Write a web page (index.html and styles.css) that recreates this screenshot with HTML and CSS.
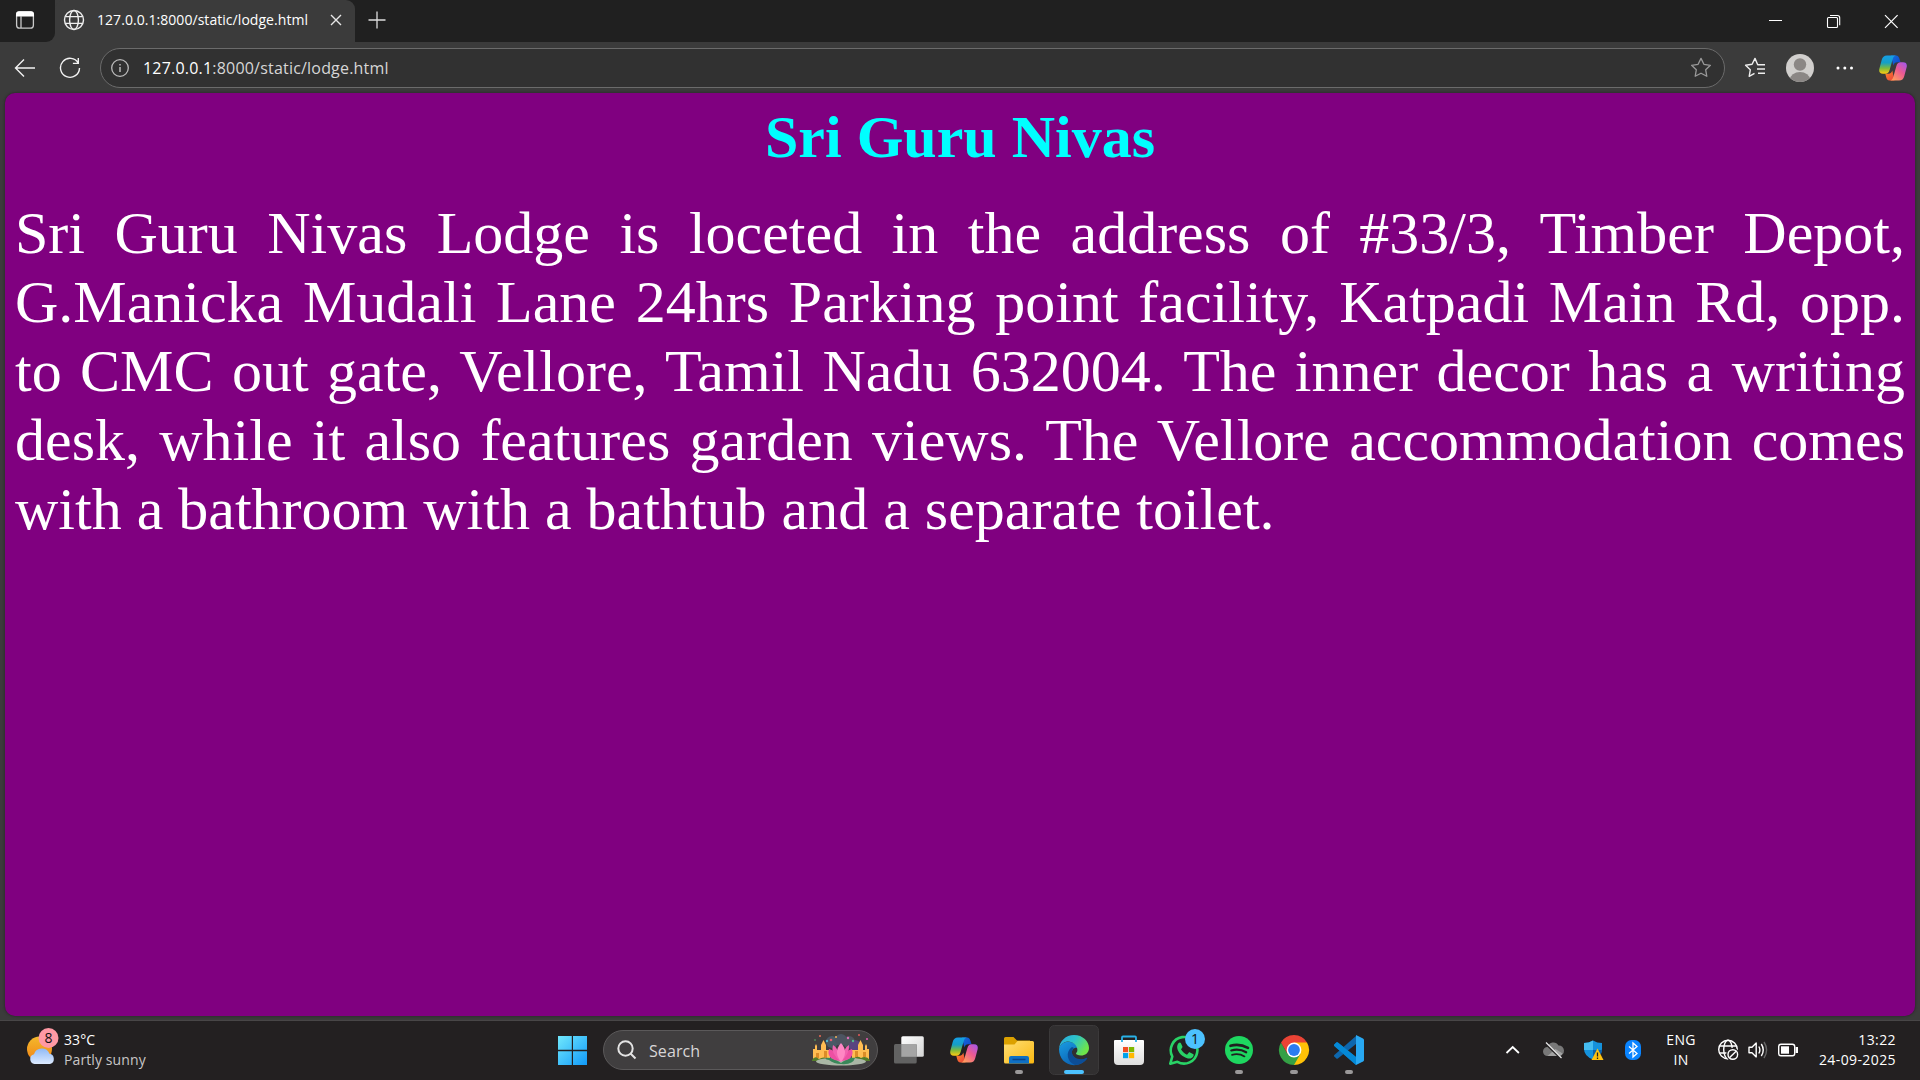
FILE: index.html
```html
<!DOCTYPE html>
<html lang="en">
<head>
<meta charset="utf-8">
<title>127.0.0.1:8000/static/lodge.html</title>
<link rel="stylesheet" href="styles.css">
</head>
<body>
<div class="browser">
  <header class="tabbar">
    <div class="tab-actions">
      <svg width="55" height="42" viewBox="0 0 55 42" fill="none"><rect x="16.6" y="11.8" width="16.8" height="16.4" rx="3" stroke="#c9c9c9" stroke-width="1.3"/><path d="M16 16.5v-2.3a3 3 0 0 1 3-3h12a3 3 0 0 1 3 3v2.3z" fill="#fff"/><path d="M21 16v12" stroke="#c9c9c9" stroke-width="1.3"/></svg>
    </div>
    <div class="tab">
      <svg class="tab-globe" width="22" height="22" viewBox="0 0 22 22" fill="none" stroke="#eee" stroke-width="1.4"><circle cx="11" cy="11" r="9.5"/><ellipse cx="11" cy="11" rx="4.4" ry="9.5"/><path d="M2.3 7.6h17.4M2.3 14.4h17.4"/></svg>
      <span class="tab-title">127.0.0.1:8000/static/lodge.html</span>
      <svg class="tab-close" width="12" height="12" viewBox="0 0 12 12" stroke="#e8e8e8" stroke-width="1.4"><path d="M1 1l10 10M11 1L1 11"/></svg>
    </div>
    <svg class="new-tab" width="18" height="18" viewBox="0 0 18 18" stroke="#ddd" stroke-width="1.3"><path d="M9 .5v17M.5 9h17"/></svg>
    <div class="window-controls">
      <svg width="58" height="42" viewBox="0 0 58 42"><path d="M23 20.5h13" stroke="#fff"/></svg>
      <svg width="58" height="42" viewBox="0 0 58 42" fill="none" stroke="#fff" stroke-width="1.1"><rect x="23.500" y="17.5" width="10" height="10" rx="1"/><path d="M26 15.5h7.5a2.2 2.2 0 0 1 2.2 2.2v7.5"/></svg>
      <svg width="58" height="42" viewBox="0 0 58 42" stroke="#fff" stroke-width="1.2"><path d="M23 15.2l12.6 12.6M35.6 15.2L23 27.8"/></svg>
    </div>
  </header>
  <nav class="toolbar">
    <svg class="back" width="22" height="20" viewBox="0 0 22 20" fill="none" stroke="#f2f2f2" stroke-width="1.4"><path d="M21 10H1.5M10 1.5L1.5 10l8.5 8.5" /></svg>
    <svg class="reload" width="22" height="22" viewBox="0 0 22 22" fill="none" stroke="#f2f2f2" stroke-width="1.4"><path d="M19.3 6.2A9.5 9.5 0 1 0 20.5 11M19.3 1v5.4h-5.4"/></svg>
    <div class="address">
      <svg class="info" width="20" height="20" viewBox="0 0 20 20" fill="none" stroke="#bbb" stroke-width="1.3"><circle cx="10" cy="10" r="8.3"/><path d="M10 9v5M10 6v1.4" stroke-width="1.5"/></svg>
      <span class="url"><b>127.0.0.1</b>:8000/static/lodge.html</span>
      <svg class="star" width="22" height="21" viewBox="0 0 22 21" fill="none" stroke="#999" stroke-width="1.3" stroke-linejoin="round"><path d="M11 1.4l2.9 5.9 6.5 1-4.7 4.5 1.1 6.5L11 16.2l-5.8 3.1 1.1-6.5L1.6 8.3l6.5-1z"/></svg>
    </div>
    <svg class="favorites" width="22" height="21" viewBox="0 0 22 21" fill="none" stroke="#eee" stroke-width="1.4" stroke-linejoin="round"><path d="M20 7.7h-6.3L11 1.4 8.1 7.3l-6.5 1 4.7 4.5-1.1 6.5 5.3-2.9M13.8 7.7H21M13 12h8M14 16.2h7"/></svg>
    <svg class="profile" width="28" height="28" viewBox="0 0 28 28"><clipPath id="pc"><circle cx="14" cy="14" r="14"/></clipPath><g clip-path="url(#pc)"><path fill="#d1cfcd" d="M0 0h28v28H0z"/><circle cx="14" cy="10.5" r="6.2" fill="#8b8785"/><ellipse cx="14" cy="25.5" rx="10" ry="7.5" fill="#8b8785"/></g></svg>
    <svg class="more" width="18" height="4" viewBox="0 0 18 4" fill="#fff"><circle cx="2" cy="2" r="1.5"/><circle cx="8.8" cy="2" r="1.5"/><circle cx="15.5" cy="2" r="1.5"/></svg>
    <svg class="copilot" width="28" height="26" viewBox="0 0 28 26">
      <defs>
        <linearGradient id="ca" x1="0" y1="0" x2="0" y2="1"><stop offset="0" stop-color="#169fe6"/><stop offset=".4" stop-color="#159fc5"/><stop offset=".7" stop-color="#7dbb3c"/><stop offset="1" stop-color="#ffcb10"/></linearGradient>
        <linearGradient id="cb" x1="1" y1="0" x2=".2" y2="1"><stop offset="0" stop-color="#9d56f2"/><stop offset=".5" stop-color="#ec5a91"/><stop offset="1" stop-color="#ffa05c"/></linearGradient>
        <linearGradient id="cc" x1="0" y1="0" x2="1" y2="1"><stop offset="0" stop-color="#1370dc"/><stop offset="1" stop-color="#1142c8"/></linearGradient>
        <linearGradient id="cd" x1="0" y1="0" x2="1" y2="1"><stop offset="0" stop-color="#ff8b28"/><stop offset="1" stop-color="#e83d3d"/></linearGradient>
        <g id="copilot">
          <path fill="url(#cc)" d="M12 .5h5c2 0 2.8 1.2 3.5 3.5l1 3.3h-3.2c-2.5 0-3.4 1.3-4 3.2z"/>
          <path fill="url(#cd)" d="M15.5 25.5h-5c-2 0-2.8-1.2-3.3-3.2l-.9-3.6h3c2.5 0 3.4-1.3 4-3.2z"/>
          <path fill="url(#ca)" d="M8 .5h9c-2 .4-2.8 1.8-3.4 4L10.600 15c-.8 2.600-2 3.700-4 3.700H4C1 18.700-.3 17 .3 14L2.700 5C3.500 2 5 .5 8 .5z"/>
          <path fill="url(#cb)" d="M20 25.500h-9c2-.4 2.800-1.800 3.400-4L17.400 11c.8-2.600 2-3.700 4-3.700H24c3 0 4.300 1.700 3.700 4.700l-2.400 9c-.8 3-2.300 4.500-5.300 4.500z"/>
        </g>
      </defs>
      <use href="#copilot"/>
    </svg>
  </nav>
  <main class="page">
    <h1>Sri Guru Nivas</h1>
    <p>Sri Guru Nivas Lodge is loceted in the address of #33/3, Timber Depot, G.Manicka Mudali Lane 24hrs Parking point facility, Katpadi Main Rd, opp. to CMC out gate, Vellore, Tamil Nadu 632004. The inner decor has a writing desk, while it also features garden views. The Vellore accommodation comes with a bathroom with a bathtub and a separate toilet.</p>
  </main>
</div>
<footer class="taskbar">
  <div class="weather">
    <svg width="32" height="40" viewBox="0 0 32 40">
      <defs><linearGradient id="sun" x1="0" y1="0" x2="0" y2="1"><stop offset="0" stop-color="#f3b92c"/><stop offset="1" stop-color="#f28416"/></linearGradient><linearGradient id="cl" x1="0" y1="0" x2="0" y2="1"><stop offset="0" stop-color="#8fb9f5"/><stop offset="1" stop-color="#dceaff"/></linearGradient></defs>
      <circle cx="12.500" cy="22" r="12.500" fill="url(#sun)"/>
      <path d="M7.500 37a5 5 0 0 1-.5-9.800 8.200 8.200 0 0 1 15.500-.5A5.300 5.300 0 0 1 23 37z" fill="url(#cl)"/>
      <circle cx="21.500" cy="11" r="10" fill="#ff99a4"/>
      <text class="weather-count" x="21.500" y="16" text-anchor="middle">8</text>
    </svg>
    <div class="weather-text"><span>33°C</span><span class="dim">Partly sunny</span></div>
  </div>
  <div class="apps">
    <svg class="app" viewBox="0 0 55 59"><defs><linearGradient id="win" gradientUnits="userSpaceOnUse" x1="13" y1="15" x2="42" y2="44"><stop offset="0" stop-color="#71e8fc"/><stop offset="1" stop-color="#119af9"/></linearGradient></defs><path fill="url(#win)" d="M13 15h13.800v13.800H13zM28 15h14v13.800H28zM13 30.200h13.800V44H13zM28 30.200h14V44H28z"/></svg>
    <div class="search">
      <svg width="20" height="20" viewBox="0 0 20 20" fill="none" stroke="#e4e4e4" stroke-width="2"><circle cx="8.500" cy="8.500" r="7.200"/><path d="M13.500 13.500l5 5"/></svg>
      <span>Search</span>
      <svg class="lotus" width="58" height="34" viewBox="0 0 58 34">
        <g opacity=".65"><circle cx="20" cy="9" r="6" fill="#4f687c"/><circle cx="29" cy="7" r="6" fill="#536174"/><circle cx="37" cy="9" r="6" fill="#566270"/><circle cx="43" cy="13" r="6" fill="#6848a3"/></g>
        <g fill="#ffbd52"><path d="M1 27V16h2v-3l1-2 1 2v4h4v-5l2.500-5 2.500 5v5h4v10zM57 27V16h-2v-3l-1-2-1 2v4h-2V12l-2.500-5L46 12v5h-6v10z"/></g>
        <path d="M4 25v-5h3v5M12 25v-7h3v7M43 24v-6h3v6M51 24v-5h3v5" fill="#dc8c28"/>
        <path d="M0 27q3-5 7-1 5-3 8 0h26q4-4 8-1 5-3 9 2v1H0z" fill="#547c2a"/>
        <ellipse cx="29" cy="28.500" rx="25" ry="4" fill="#aab7a6"/><path d="M17 27q-3 0-4-2 8-1 16 5 8-6 14-5-2 7-14 6-7 0-12-4z" fill="#39885a"/>
        <path fill="#ee4fa3" d="M29 28Q14 27 17 16q7 1 12 12Q43 27 40 16q-7 1-11 12z"/><path fill="#f263b0" d="M29 29Q18 20 21 12q6 3 8 17 9-9 8-17-6 3-8 17z"/><path fill="#ff87c4" d="M29 29q-8-10 0-19 8 9 0 19z"/>
        <g><circle cx="8" cy="3" r="1" fill="#e96b56"/><circle cx="15" cy="8" r="1.200" fill="#55b6c9"/><circle cx="19" cy="7" r="1.300" fill="#e65e6e"/><circle cx="24" cy="4" r="1" fill="#f0b45c"/><circle cx="36" cy="5" r="1.200" fill="#de6fb8"/><circle cx="41" cy="8" r="1.200" fill="#55b98a"/><circle cx="47" cy="2" r="1" fill="#e35a5a"/><circle cx="55" cy="6" r="1" fill="#e35ab2"/><circle cx="3" cy="7" r=".8" fill="#5ab96a"/></g>
      </svg>
    </div>
    <svg class="app" viewBox="0 0 55 59"><defs><linearGradient id="tv" x1="0" y1="0" x2="1" y2="1"><stop offset="0" stop-color="#fff"/><stop offset="1" stop-color="#d5d5d5"/></linearGradient></defs><rect x="19.300" y="15.300" width="22.500" height="20.500" rx="1.500" fill="url(#tv)"/><rect x="12" y="23" width="22.700" height="19.600" rx="1.500" fill="#626262"/><path d="M19.300 23h15.400v12.800H19.300z" fill="#a5a5a5"/></svg>
    <svg class="app" viewBox="0 0 55 59"><use href="#copilot" x="13" y="16"/></svg>
    <svg class="app" viewBox="0 0 55 59"><defs><linearGradient id="fo" x1="0" y1="0" x2="1" y2="1"><stop offset="0" stop-color="#ffdf75"/><stop offset="1" stop-color="#fbb811"/></linearGradient></defs><path fill="#dca100" d="M12 17.500q0-1.500 1.500-1.500h8l3.500 3.500H38V28H12z"/><path fill="url(#fo)" d="M12 23.500h10.500l3-3.500H40.500q1.500 0 1.500 1.500V41q0 1.500-1.500 1.500h-27Q12 42.500 12 41z"/><path d="M17 42.500V37q0-2 2-2h16q2 0 2 2v5.500z" fill="#0f70c4"/><path d="M20.500 38.500h13" stroke="#0b438b" stroke-width="1.500"/><rect x="23" y="49" width="8" height="4" rx="2" fill="#9a9899"/></svg>
    <svg class="app" viewBox="0 0 55 59">
      <defs><linearGradient id="e1" x1="0" y1="0" x2="1" y2=".5"><stop offset="0" stop-color="#2aa8df"/><stop offset=".5" stop-color="#2dc3cb"/><stop offset="1" stop-color="#6ee54a"/></linearGradient><linearGradient id="e2" x1="0" y1="0" x2=".7" y2="1"><stop offset="0" stop-color="#199ce2"/><stop offset="1" stop-color="#0a5cae"/></linearGradient></defs>
      <rect x="2.500" y="4.500" width="49" height="49" rx="5" fill="#312f30" stroke="#3b393a"/>
      <path fill="url(#e2)" d="M12 28c1-5 6-8 11-7 4 .5 7 3 8 6-4-1-7 2-6 6 1 5 8 8 15 4-3 5-8 7.200-13 7.200C18 44 12 37 12 28z"/>
      <path fill="#0c4d96" d="M25 26c-7 5-5 15 3 18 5 0 10-3 12.200-6.500.4-.8-.3-1-.9-.6C33 40 26 37 25 32c-.4-2 .6-4 2-5z"/>
      <path fill="url(#e1)" d="M12 29C12 20 19 14 27 14c9 0 15 6.500 15 13 0 5-4 7.500-8 7.500-3 0-5-.9-5-1.900 0-.8 1.400-1.300 1.400-3.600 0-4.500-4.400-8.500-9.400-8.500C16 20.500 12 25 12 29z"/>
      <rect x="17" y="49" width="20" height="4" rx="2" fill="#4cc2ff"/>
    </svg>
    <svg class="app" viewBox="0 0 55 59"><defs><linearGradient id="st" x1="0" y1="0" x2="0" y2="1"><stop offset="0" stop-color="#fff"/><stop offset="1" stop-color="#dedede"/></linearGradient></defs><path fill="url(#st)" d="M12 20q0-1 1-1h28q1 0 1 1v20q0 4-4 4H16q-4 0-4-4z"/><path d="M20 21v-4.500q0-1 1-1h12q1 0 1 1V21" fill="none" stroke="#29b2e8" stroke-width="1.800"/><path fill="#f04e23" d="M21 26h5.200v5.200H21z"/><path fill="#7db800" d="M27 26h5.200v5.200H27z"/><path fill="#00a2ed" d="M21 32h5.200v5.200H21z"/><path fill="#ffb800" d="M27 32h5.200v5.200H27z"/></svg>
    <svg class="app" viewBox="0 0 55 59"><path fill="none" stroke="#29d366" stroke-width="2.600" stroke-linejoin="round" d="M13.300 42.700l2-7.200a13.300 13.300 0 1 1 5.100 5.300z"/><path fill="#29d366" d="M21.700 22c.8-.7 1.700-.7 2.200.2l1.500 3.400c.2.500 0 1-1.400 2.700 1.500 2.700 3.400 4.300 6 5.400l1.700-2c.4-.5.8-.5 1.300-.2l3 1.500c.7.400.8.7.5 1.700-.7 2.200-3 3.300-5.500 2.700-5.700-1.500-10-6-10.800-10.500-.2-2 .3-3.700 1.500-4.900z"/><circle cx="38" cy="18" r="10" fill="#4cc2ff"/><text class="badge-count" x="38" y="23.200" text-anchor="middle">1</text></svg>
    <svg class="app" viewBox="0 0 55 59"><circle cx="27" cy="29" r="14" fill="#1ed760"/><g fill="none" stroke="#201f20" stroke-linecap="round"><path stroke-width="2.600" d="M18.500 24.800q9-2.500 17.500 2"/><path stroke-width="2.200" d="M19.300 29.500q8-2.200 14.900 1.800"/><path stroke-width="1.800" d="M20 33.800q7-1.700 12.500 1.600"/></g><rect x="23" y="49" width="8" height="4" rx="2" fill="#9a9899"/></svg>
    <svg class="app" viewBox="0 0 55 59"><path fill="#ea4335" d="M27 29L14 21.500a15 15 0 0 1 26 0z"/><path fill="#ffc107" d="M27 29V21.500H40A15 15 0 0 1 27 44z"/><path fill="#34a045" d="M14 21.500A15 15 0 0 0 27 44l6.500-11.200L27 29l-6.500 3.700z"/><path fill="#ea4335" d="M14 21.500l6.500 11.200L27 21.500z"/><circle cx="27" cy="29" r="7.400" fill="#fff"/><circle cx="27" cy="29" r="5.900" fill="#2a7cf0"/><rect x="23" y="49" width="8" height="4" rx="2" fill="#9a9899"/></svg>
    <svg class="app" viewBox="0 0 55 59"><path fill="#0078c4" d="M12.300 23.500l2-2q.8-.6 1.600 0L34 36v8L12.300 25q-.7-.7 0-1.500z"/><path fill="#0e67ad" d="M12.300 35.500l2 2q.8.600 1.600 0L34 23v-8L12.300 34q-.7.700 0 1.500z"/><path fill="#0589d6" d="M12.300 23.500l2-2q.8-.6 1.600 0L34 36v8L12.300 25q-.7-.7 0-1.500z"/><path fill="#28a8f2" d="M34 14l7 3.400q1 .5 1 1.600v20q0 1.100-1 1.600L34 44z"/><rect x="23" y="49" width="8" height="4" rx="2" fill="#9a9899"/></svg>
  </div>
  <div class="tray">
    <svg class="tray-icon" viewBox="0 0 40 30" fill="none" stroke="#fff" stroke-width="1.800"><path d="M13.500 18l6.200-6 6.200 6"/></svg>
    <svg class="tray-icon" viewBox="0 0 40 30"><path fill="#787878" d="M14.500 21a4.500 4.500 0 0 1 0-9 6 6 0 0 1 11-1.500 5 5 0 0 1 .5 10.500z"/><path fill="#a2a2a2" d="M14.500 21l8-7 7 4.500q-1 2.500-3.500 2.500z"/><path d="M12 8l15.500 15" stroke="#232021" stroke-width="2"/><path d="M13 7.500l15.500 15.500" stroke="#e8e8e8" stroke-width="1.300"/></svg>
    <svg class="tray-icon" viewBox="0 0 40 30"><path fill="#1592dc" d="M11 8q5 0 9-2.500Q24 8 29 8v6q0 7-9 10.500Q11 21 11 14z"/><path fill="#45bdf1" d="M11 8q5 0 9-2.500V15h-9z"/><path fill="#0c62ad" d="M20 15h9q0 6-9 9.500z"/><path fill="#ffc20f" d="M24.500 13.500l6 11.500h-12z"/><path d="M24.500 17.500v4M24.500 22.500v1.500" stroke="#222" stroke-width="1.300"/></svg>
    <svg class="tray-icon" viewBox="0 0 40 30"><rect x="12" y="5" width="16" height="20" rx="6.500" fill="#0a84ff"/><path d="M16 11.500l8 7-4 3.500V8l4 3.500-8 7" fill="none" stroke="#fff" stroke-width="1.300"/></svg>
    <div class="lang"><span>ENG</span><span>IN</span></div>
    <svg class="status" viewBox="0 0 90 30" fill="none" stroke="#fff" stroke-width="1.400"><g><circle cx="15" cy="14.500" r="9.300"/><ellipse cx="15" cy="14.500" rx="4.300" ry="9.300"/><path d="M6.500 11h17M6.500 18h9"/><circle cx="19.800" cy="19.500" r="6.700" fill="#232021" stroke="none"/><circle cx="19.800" cy="19.500" r="4.800"/><path d="M16.500 22.800l6.600-6.600"/></g><path stroke-linejoin="round" d="M36 12.300h3l4.200-4.200v13.800l-4.200-4.200h-3z"/><path d="M45.800 11.500q2.200 3.500 0 7M48.300 9q3.900 6 0 12"/><path stroke="#666" d="M51 7q5.200 8 0 16"/><rect x="65.700" y="9.200" width="16" height="11.600" rx="2.300"/><path d="M68 11.300h8v7.400h-8z" fill="#fff" stroke="none"/><path d="M83.800 12v6" stroke-width="2.400"/></svg>
    <div class="clock"><span>13:22</span><span>24-09-2025</span></div>
  </div>
</footer>
</body>
</html>
```
FILE: styles.css
```css
* { box-sizing: border-box; }
body {
  margin: 0;
  width: 1920px;
  height: 1080px;
  overflow: hidden;
  display: flex;
  flex-direction: column;
  background: #3b3b3b;
  font-family: "Open Sans", "Noto Sans", sans-serif;
  color: #fff;
}
svg { display: block; flex: none; }
.browser { height: 1020px; display: flex; flex-direction: column; }

.tabbar { height: 42px; display: flex; background: linear-gradient(90deg, #3b3b3b 64px, #202020 64px 346px, #202020 346px); }
.tab-actions {
  width: 55px;
  background: #202020;
  border-bottom-right-radius: 9px;
}
.tab {
  width: 300px;
  display: flex;
  align-items: center;
  padding: 0 13px 2px 8px;
  background: #3b3b3b;
  border-radius: 9px 9px 0 0;
}
.tab-title { margin: 0 0 2px 12px; width: 227px; font-size: 14px; letter-spacing: .05px; white-space: nowrap; }
.tab-close { margin-left: 6px; }
.new-tab { margin: 11px 0 0 13px; }
.window-controls { display: flex; margin-left: auto; }

.toolbar { height: 51px; display: flex; align-items: center; }
.back { margin-left: 14px; }
.reload { margin-left: 23px; }
.address {
  width: 1625px;
  height: 40px;
  margin-left: 19px;
  display: flex;
  align-items: center;
  border: 1px solid #6b6b6b;
  border-radius: 20px;
  background: #313131;
}
.info { margin-left: 9px; }
.url { margin: 0 auto 0 13px; font-size: 16px; letter-spacing: .2px; color: #d6d6d6; white-space: nowrap; }
.url b { font-weight: 400; color: #fff; }
.star { margin-right: 12px; }
.favorites { margin-left: 19px; }
.profile { margin-left: 20px; }
.more { margin-left: 22px; }
.copilot { margin-left: 25px; }

.page {
  height: 923px;
  margin: 0 5px;
  padding: 10px;
  background: #800080;
  border-radius: 10px;
  box-shadow: 0 0 3px #222;
  font: 60px "Liberation Serif", "Times New Roman", serif;
}
.page h1 { margin: 0; font-size: 60px; line-height: 69px; text-align: center; color: #0ff; }
.page p { margin: 27px 0 0; line-height: 69px; text-align: justify; }

.taskbar {
  height: 60px;
  display: flex;
  background: #232021;
  border-top: 1px solid #484647;
  font-size: 14px;
}
.weather { width: 545px; padding: 6px 0 0 27px; display: flex; gap: 5px; }
.weather-count { font-size: 14px; fill: #111; }
.weather-text { display: flex; flex-direction: column; line-height: 20px; padding-top: 3px; letter-spacing: .1px; }
.dim { color: #c8c6c7; }
.apps { width: 948px; display: flex; }
.app { width: 55px; height: 59px; }
.badge-count { font-size: 14px; fill: #111; }
.search {
  width: 275px;
  height: 40px;
  margin: 9px 4px 0 3px;
  padding: 0 7px 0 13px;
  display: flex;
  align-items: center;
  border: 1px solid #5b595a;
  border-radius: 20px;
  background: #403e3f;
  font-size: 16px;
  color: #d8d6d7;
}
.search span { margin: 2px 0 0 12px; letter-spacing: .1px; }
.lotus { margin-left: auto; }
.tray { height: 58px; display: flex; align-items: center; }
.tray-icon { width: 40px; height: 30px; }
.lang, .clock { display: flex; flex-direction: column; line-height: 20px; padding-bottom: 1px; }
.lang { width: 56px; align-items: center; letter-spacing: .3px; }
.status { width: 90px; height: 30px; margin-left: 4px; }
.clock { width: 93px; align-items: flex-end; letter-spacing: .4px; }
```
